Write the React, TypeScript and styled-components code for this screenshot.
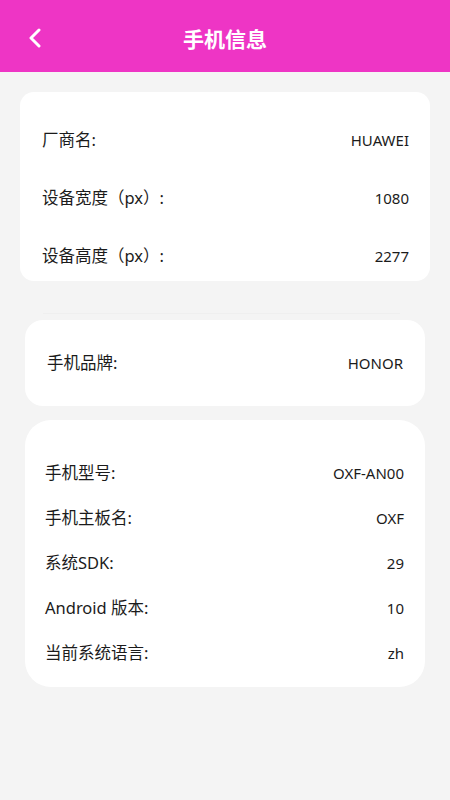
import React from "react";
import styled, { createGlobalStyle } from "styled-components";

const Global = createGlobalStyle`
  html, body { margin: 0; padding: 0; background: #f4f4f4; }
  body { font-family: "Noto Sans", "Noto Sans CJK SC", sans-serif; }
  * { box-sizing: border-box; }
`;

const Page = styled.div`
  width: 450px;
  min-height: 800px;
  background: #f4f4f4;
  display: flex;
  flex-direction: column;
`;

const Header = styled.header`
  height: 72px;
  background: #ee35c5;
  display: flex;
  align-items: center;
  justify-content: center;
  position: relative;
`;

const Back = styled.button`
  position: absolute;
  left: 22px;
  top: 22px;
  width: 26px;
  height: 32px;
  padding: 0;
  border: none;
  background: transparent;
  display: flex;
  align-items: center;
  justify-content: center;
`;

const Title = styled.h1`
  margin: 0;
  color: #ffffff;
  font-family: "Noto Sans CJK SC", sans-serif;
  font-size: 21px;
  font-weight: 700;
  line-height: 1;
  transform: translateY(2px);
`;

const Content = styled.main`
  display: flex;
  flex-direction: column;
  padding-top: 20px;
`;

const Card = styled.section<{
  $mx: number;
  $radius: number;
  $pt: number;
  $pb: number;
  $pl: number;
  $pr: number;
  $gap: number;
  $mb: number;
}>`
  margin: 0 ${(p) => p.$mx}px ${(p) => p.$mb}px;
  background: #ffffff;
  border-radius: ${(p) => p.$radius}px;
  padding: ${(p) => p.$pt}px ${(p) => p.$pr}px ${(p) => p.$pb}px ${(p) => p.$pl}px;
  display: flex;
  flex-direction: column;
  gap: ${(p) => p.$gap}px;
`;

const Divider = styled.div`
  height: 1px;
  margin: 0 50px 6px 43px;
  background: #efefef;
`;

const Row = styled.div`
  height: 24px;
  display: flex;
  align-items: center;
  justify-content: space-between;
  color: #1b1b1b;
`;

const Label = styled.span`
  font-size: 16.5px;
  line-height: 24px;
`;

const Value = styled.span`
  font-size: 15px;
  line-height: 24px;
`;

type Item = [string, string];

const InfoRows = ({ items }: { items: Item[] }) => (
  <>
    {items.map(([l, v]) => (
      <Row key={l}>
        <Label>{l}</Label>
        <Value>{v}</Value>
      </Row>
    ))}
  </>
);

export default function App() {
  return (
    <Page>
      <Global />
      <Header>
        <Back aria-label="back">
          <svg width="16" height="20" viewBox="0 0 16 20">
            <path
              d="M12 2 L4 10 L12 18"
              fill="none"
              stroke="#ffffff"
              strokeWidth="3"
              strokeLinecap="round"
              strokeLinejoin="round"
            />
          </svg>
        </Back>
        <Title>手机信息</Title>
      </Header>
      <Content>
        <Card $mx={20} $radius={14} $pt={36} $pb={13} $pl={22} $pr={21} $gap={34} $mb={32}>
          <InfoRows
            items={[
              ["厂商名:", "HUAWEI"],
              ["设备宽度（px）:", "1080"],
              ["设备高度（px）:", "2277"],
            ]}
          />
        </Card>
        <Divider />
        <Card $mx={25} $radius={18} $pt={31} $pb={31} $pl={22} $pr={22} $gap={0} $mb={14}>
          <InfoRows items={[["手机品牌:", "HONOR"]]} />
        </Card>
        <Card $mx={25} $radius={26} $pt={41} $pb={22} $pl={20} $pr={21} $gap={21} $mb={0}>
          <InfoRows
            items={[
              ["手机型号:", "OXF-AN00"],
              ["手机主板名:", "OXF"],
              ["系统SDK:", "29"],
              ["Android 版本:", "10"],
              ["当前系统语言:", "zh"],
            ]}
          />
        </Card>
      </Content>
    </Page>
  );
}
